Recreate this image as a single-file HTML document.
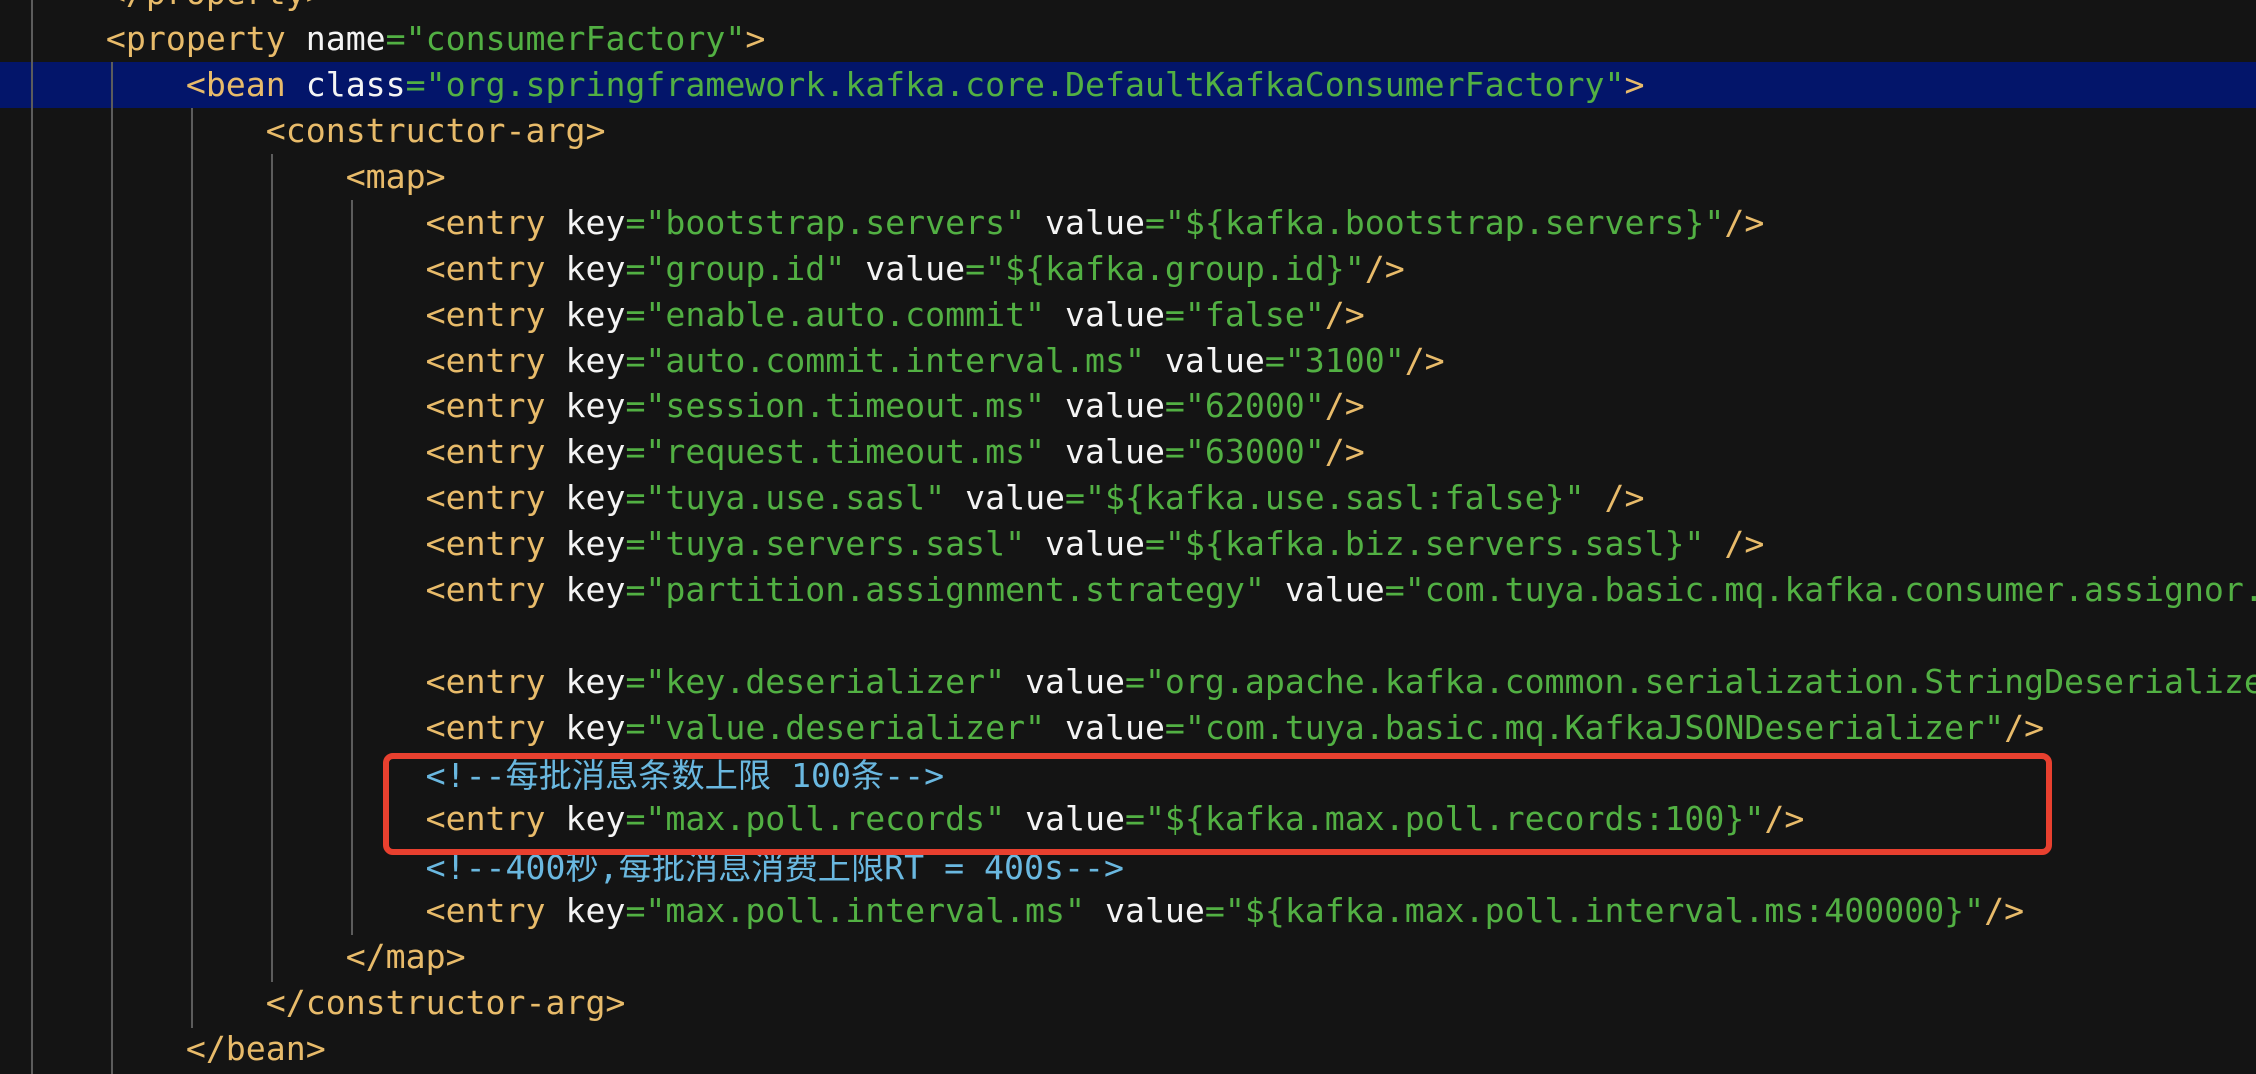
<!DOCTYPE html>
<html><head><meta charset="utf-8"><style>
html,body{margin:0;padding:0;background:#141414;}
body{width:2256px;height:1074px;position:relative;overflow:hidden;
font-family:"DejaVu Sans Mono","Liberation Mono","Noto Sans CJK SC",monospace;font-size:33.2px;}
.l{position:absolute;left:26px;width:2230px;overflow:hidden;height:46px;line-height:46px;white-space:pre;}
.t{color:#e8bb6a}.a{color:#f4f4f4}.s{color:#52b043}.c{color:#6ab8e0}
.g{position:absolute;width:2px;background:#5c5c5c;}
.hl{position:absolute;left:0;top:62px;width:2256px;height:46px;background:#03156a;}
.box{position:absolute;left:383px;top:753px;width:1657px;height:90px;border:6px solid #e8402f;border-radius:10px;}
.cj{font-family:"Noto Sans CJK SC",sans-serif;}
</style></head><body>
<div class="hl"></div>
<div class="g" style="left:31px;top:0;height:1074px"></div>
<div class="g" style="left:111px;top:62px;height:1012px"></div>
<div class="g" style="left:191px;top:108px;height:920px"></div>
<div class="g" style="left:271px;top:154px;height:828px"></div>
<div class="g" style="left:351px;top:200px;height:735px"></div>

<div class="l" style="top:-30px"><span class="t">    &lt;/property&gt;</span></div>
<div class="l" style="top:16px"><span class="t">    &lt;property</span> <span class="a">name</span><span class="s">="consumerFactory"</span><span class="t">&gt;</span></div>
<div class="l" style="top:62px"><span class="t">        &lt;bean</span> <span class="a">class</span><span class="s">="org.springframework.kafka.core.DefaultKafkaConsumerFactory"</span><span class="t">&gt;</span></div>
<div class="l" style="top:108px"><span class="t">            &lt;constructor-arg&gt;</span></div>
<div class="l" style="top:154px"><span class="t">                &lt;map&gt;</span></div>
<div class="l" style="top:200px"><span class="t">                    &lt;entry</span> <span class="a">key</span><span class="s">="bootstrap.servers"</span> <span class="a">value</span><span class="s">="${kafka.bootstrap.servers}"</span><span class="t">/&gt;</span></div>
<div class="l" style="top:246px"><span class="t">                    &lt;entry</span> <span class="a">key</span><span class="s">="group.id"</span> <span class="a">value</span><span class="s">="${kafka.group.id}"</span><span class="t">/&gt;</span></div>
<div class="l" style="top:292px"><span class="t">                    &lt;entry</span> <span class="a">key</span><span class="s">="enable.auto.commit"</span> <span class="a">value</span><span class="s">="false"</span><span class="t">/&gt;</span></div>
<div class="l" style="top:338px"><span class="t">                    &lt;entry</span> <span class="a">key</span><span class="s">="auto.commit.interval.ms"</span> <span class="a">value</span><span class="s">="3100"</span><span class="t">/&gt;</span></div>
<div class="l" style="top:383px"><span class="t">                    &lt;entry</span> <span class="a">key</span><span class="s">="session.timeout.ms"</span> <span class="a">value</span><span class="s">="62000"</span><span class="t">/&gt;</span></div>
<div class="l" style="top:429px"><span class="t">                    &lt;entry</span> <span class="a">key</span><span class="s">="request.timeout.ms"</span> <span class="a">value</span><span class="s">="63000"</span><span class="t">/&gt;</span></div>
<div class="l" style="top:475px"><span class="t">                    &lt;entry</span> <span class="a">key</span><span class="s">="tuya.use.sasl"</span> <span class="a">value</span><span class="s">="${kafka.use.sasl:false}"</span> <span class="t">/&gt;</span></div>
<div class="l" style="top:521px"><span class="t">                    &lt;entry</span> <span class="a">key</span><span class="s">="tuya.servers.sasl"</span> <span class="a">value</span><span class="s">="${kafka.biz.servers.sasl}"</span> <span class="t">/&gt;</span></div>
<div class="l" style="top:567px"><span class="t">                    &lt;entry</span> <span class="a">key</span><span class="s">="partition.assignment.strategy"</span> <span class="a">value</span><span class="s">="com.tuya.basic.mq.kafka.consumer.assignor.RoundRobin"</span></div>
<div class="l" style="top:659px"><span class="t">                    &lt;entry</span> <span class="a">key</span><span class="s">="key.deserializer"</span> <span class="a">value</span><span class="s">="org.apache.kafka.common.serialization.StringDeserializer"</span><span class="t">/&gt;</span></div>
<div class="l" style="top:705px"><span class="t">                    &lt;entry</span> <span class="a">key</span><span class="s">="value.deserializer"</span> <span class="a">value</span><span class="s">="com.tuya.basic.mq.KafkaJSONDeserializer"</span><span class="t">/&gt;</span></div>
<div class="l c" style="top:750px">                    &lt;!--<span class="cj">每批消息条数上限</span> 100<span class="cj">条</span>--&gt;</div>
<div class="l" style="top:796px"><span class="t">                    &lt;entry</span> <span class="a">key</span><span class="s">="max.poll.records"</span> <span class="a">value</span><span class="s">="${kafka.max.poll.records:100}"</span><span class="t">/&gt;</span></div>
<div class="l c" style="top:842px">                    &lt;!--400<span class="cj">秒</span>,<span class="cj">每批消息消费上限</span>RT = 400s--&gt;</div>
<div class="l" style="top:888px"><span class="t">                    &lt;entry</span> <span class="a">key</span><span class="s">="max.poll.interval.ms"</span> <span class="a">value</span><span class="s">="${kafka.max.poll.interval.ms:400000}"</span><span class="t">/&gt;</span></div>
<div class="l" style="top:934px"><span class="t">                &lt;/map&gt;</span></div>
<div class="l" style="top:980px"><span class="t">            &lt;/constructor-arg&gt;</span></div>
<div class="l" style="top:1026px"><span class="t">        &lt;/bean&gt;</span></div>
<div class="box"></div>
</body></html>
